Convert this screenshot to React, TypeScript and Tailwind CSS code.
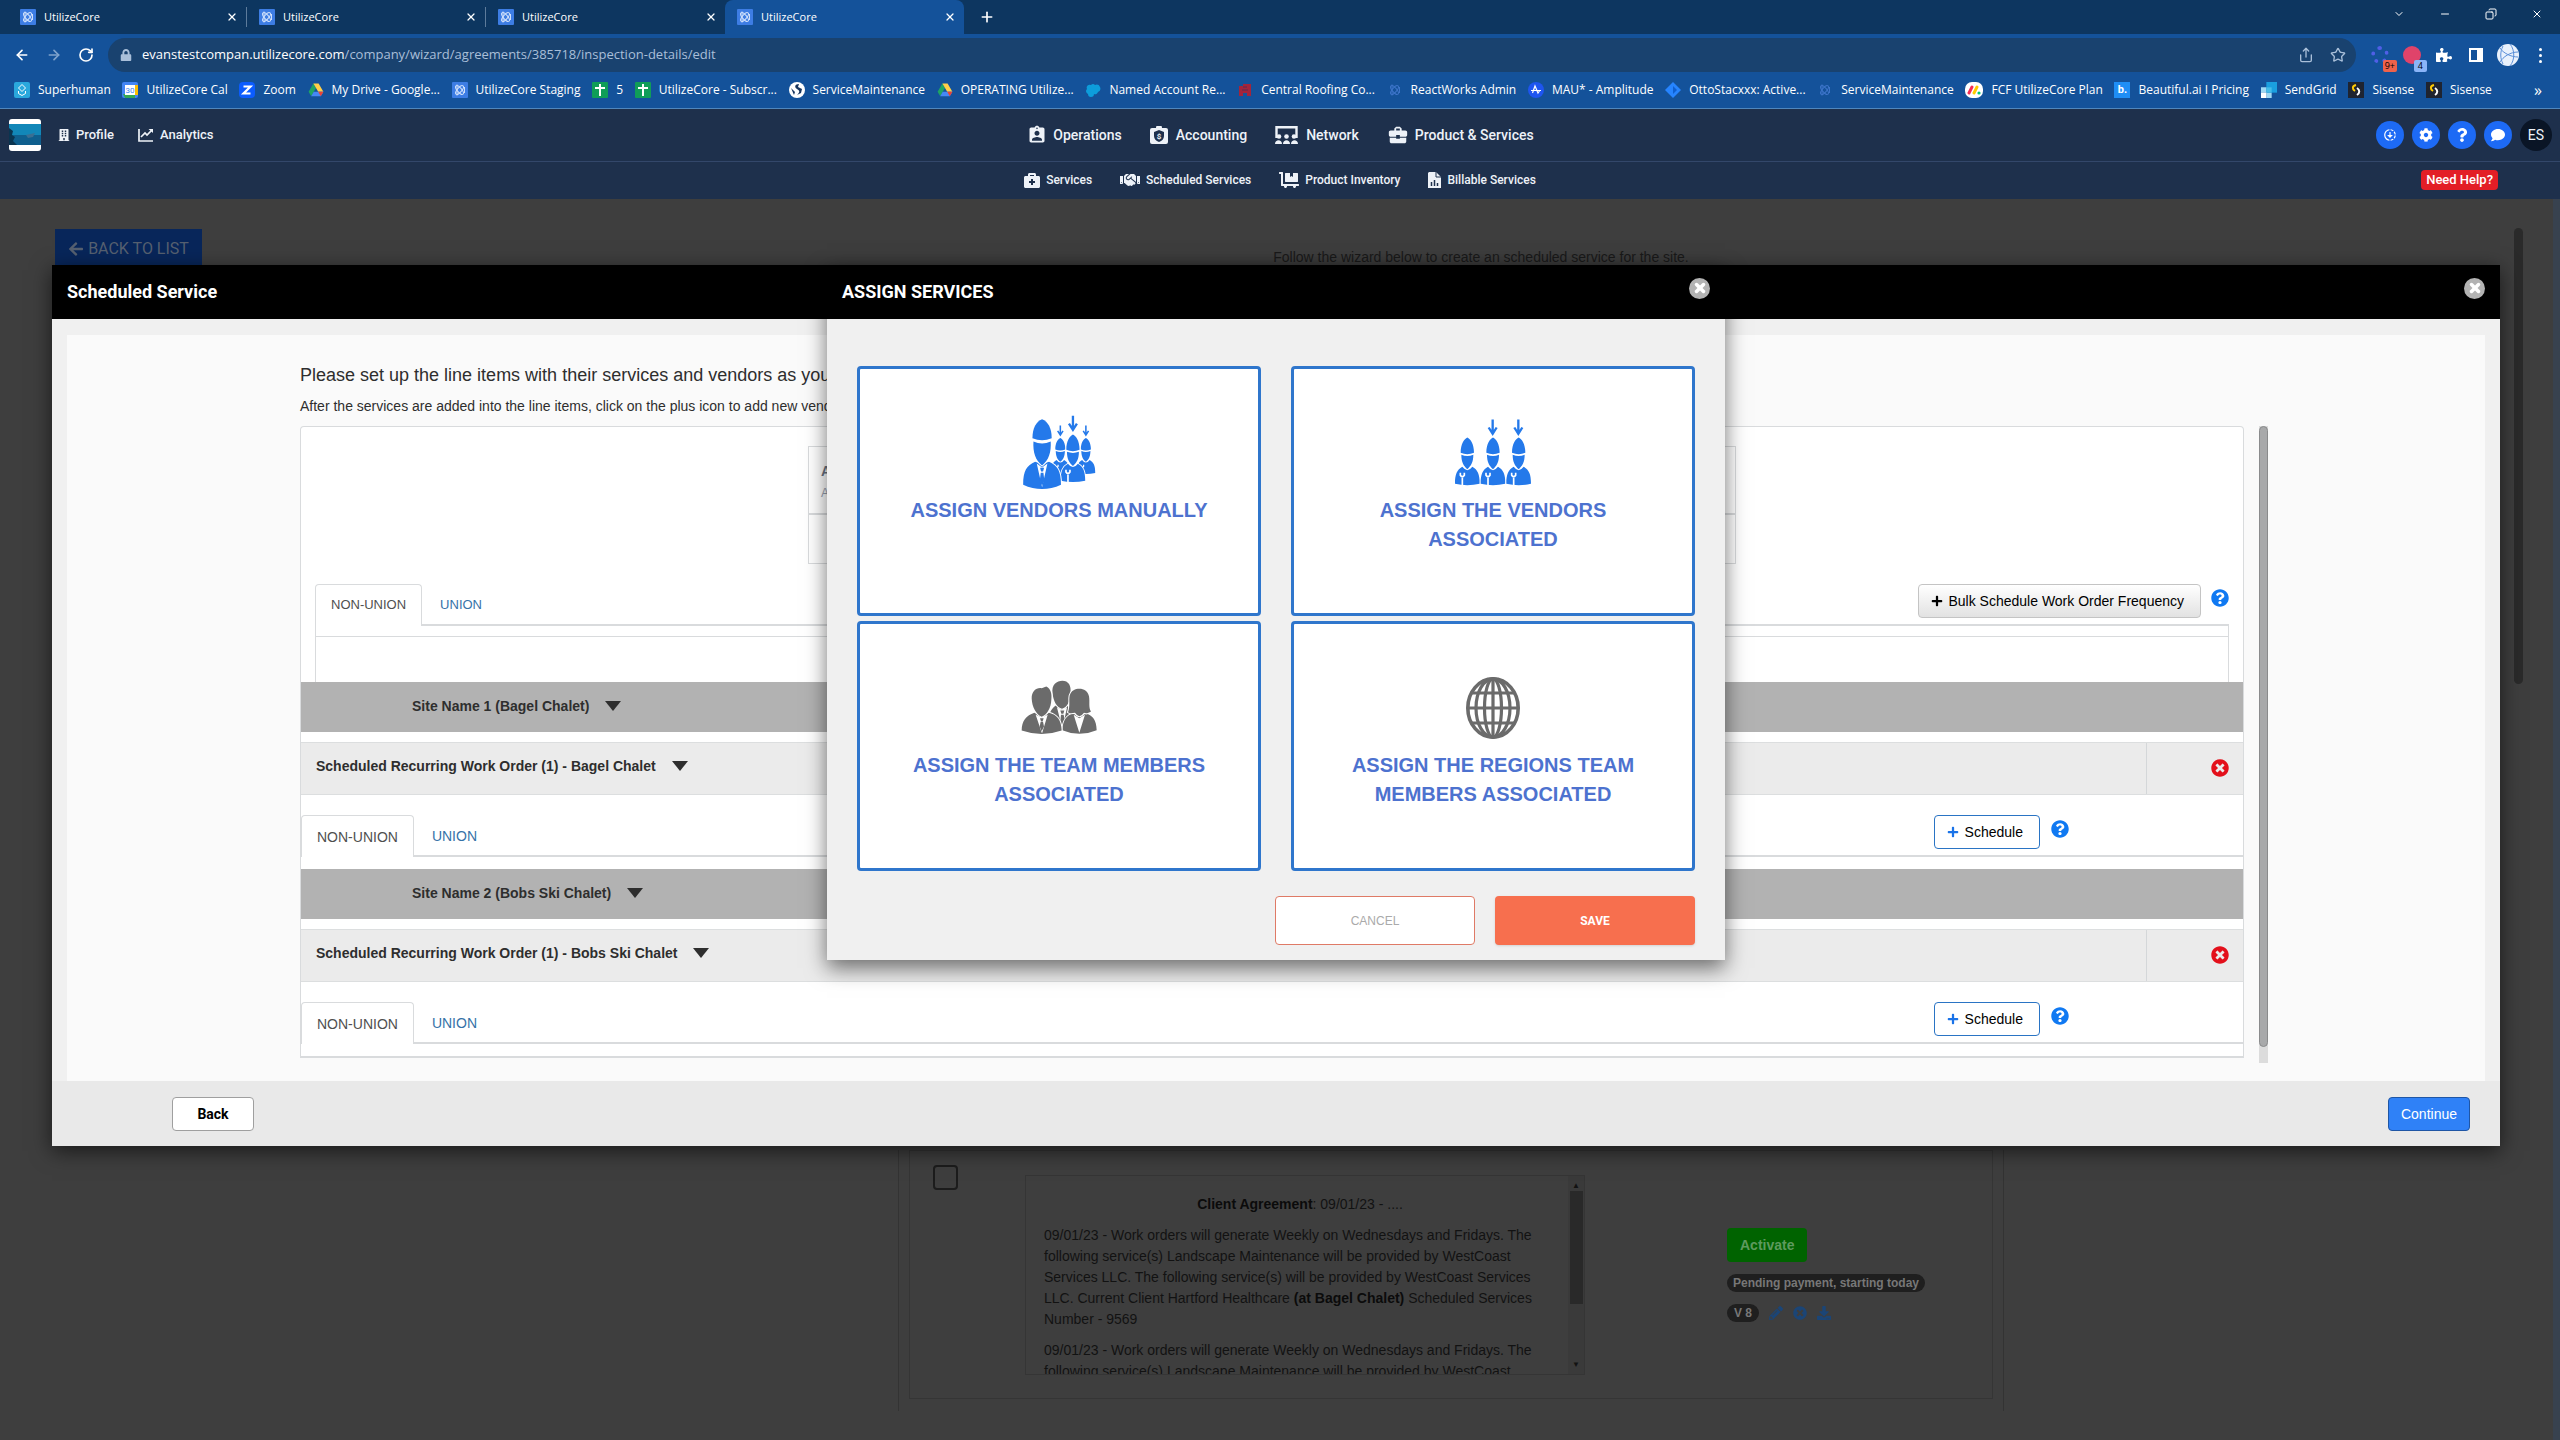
import React from 'react';
import {
    FaArrowLeft, FaBriefcaseMedical, FaBuilding, FaCog, FaComment, FaDownload, FaDollyFlatbed,
    FaHandshake, FaLock, FaPencilAlt, FaPlus, FaPuzzlePiece, FaQuestion, FaQuestionCircle, FaTimesCircle,
} from 'react-icons/fa';
import { MdAssignmentInd, MdBusinessCenter, MdDownloading } from 'react-icons/md';
import { ArrowLeft, ArrowRight, ChevronDown, Copy, Minus, Plus, RotateCw, Share, Star, X } from 'lucide-react';

const ARIAL = 'font-["Liberation_Sans",Arial,sans-serif]';
const ROBOTO = 'font-[Roboto,sans-serif]';

/* ---------- small drawings ---------- */

const Atom: React.FC<{ bg?: string; line?: string }> = ({ bg = '#3d7de4', line = '#cfe0fb' }) => (
    <svg viewBox="0 0 16 16" className="size-4 shrink-0">
        <rect width="16" height="16" rx="1" fill={bg} />
        <g fill="none" stroke={line} strokeWidth="1">
            <ellipse cx="7.5" cy="8" rx="5.5" ry="2.2" transform="rotate(50 7.5 8)" />
            <ellipse cx="7.5" cy="8" rx="5.5" ry="2.2" transform="rotate(-50 7.5 8)" />
            <path d="M5 2.5v11M12.5 5v6" />
        </g>
    </svg>
);

const DriveIcon = () => (
    <svg viewBox="0 0 16 16" className="size-4 shrink-0">
        <path d="M5.4 1.5 8 6 3.2 14.2.6 9.8z" fill="#1fa463" />
        <path d="M5.4 1.5h5.2l4.8 8.3h-5.2z" fill="#ffcf48" />
        <path d="M5.7 9.8h9.7l-2.6 4.4H3.2z" fill="#4688f4" />
        <path d="M10.2 9.8h5.2l-2.6 4.4z" fill="#ea4335" />
    </svg>
);

const SheetIcon = () => (
    <svg viewBox="0 0 16 16" className="size-4 shrink-0">
        <rect width="16" height="16" rx="1" fill="#109d58" />
        <path d="M8 2v12M3 6h10" stroke="#fff" strokeWidth="2" />
    </svg>
);

const SuperhumanIcon = () => (
    <svg viewBox="0 0 16 16" className="size-4 shrink-0">
        <rect width="16" height="16" rx="2" fill="#2aa8dd" />
        <path d="M8 2.500 11.500 6 8 9.500 4.500 6zM4.500 9v2.500L8 13.500l3.500-2V9" fill="none" stroke="#fff" />
    </svg>
);

const CalendarIcon = () => (
    <svg viewBox="0 0 16 16" className="size-4 shrink-0">
        <rect width="16" height="16" rx="2" fill="#4285f4" />
        <path d="M12 3h4v10h-4z" fill="#fbbc04" />
        <path d="M1 12h12v4H3z" fill="#34a853" />
        <rect x="3" y="3" width="10" height="10" fill="#fff" />
        <text x="8" y="11" fontSize="8" textAnchor="middle" fill="#4285f4" fontFamily="Roboto">30</text>
    </svg>
);

const ZoomIcon = () => (
    <svg viewBox="0 0 16 16" className="size-4 shrink-0">
        <rect width="16" height="16" rx="4" fill="#0b5cff" />
        <path d="M4.500 4.500h7l-7 7h7" fill="none" stroke="#fff" strokeWidth="2.200" />
    </svg>
);

const GlobeBadge = () => (
    <svg viewBox="0 0 16 16" className="size-4 shrink-0">
        <circle cx="8" cy="8" r="8" fill="#fff" />
        <path d="M10 2C6 2 5 5 8 7s3 3 0 6l4-2 1-4-4-2zM2 6l4 4-1 3z" fill="#17355f" />
    </svg>
);

const CloudIcon = () => (
    <svg viewBox="0 0 16 16" className="size-4 shrink-0">
        <path d="M3 12a3 3 0 0 1-1-5 3 3 0 0 1 4-4 3 3 0 0 1 4 0 3.500 3.500 0 0 1 3 7 3 3 0 0 1-4 2 3 3 0 0 1-6 0z" fill="#0d9ddb" />
    </svg>
);

const RoofIcon = () => (
    <svg viewBox="0 0 16 16" className="size-4 shrink-0">
        <path d="M2 4h4V2h8v12h-4v-3H6v3H2z" fill="#a3243b" />
        <path d="M6 5h4M5 8h6" stroke="#5b2a52" />
    </svg>
);

const AmplitudeIcon = () => (
    <svg viewBox="0 0 16 16" className="size-4 shrink-0">
        <circle cx="8" cy="8" r="8" fill="#1e55f0" />
        <path d="M3 8.500h10M4.500 11 7 4l3 7 1.500-2" fill="none" stroke="#fff" strokeWidth="1.200" />
    </svg>
);

const JiraIcon = () => (
    <svg viewBox="0 0 16 16" className="size-4 shrink-0">
        <path d="m8 0 8 8-8 8-8-8z" fill="#2684ff" />
        <path d="m8 4 4 4-4 4z" fill="#0e5fd0" />
    </svg>
);

const MondayIcon = () => (
    <svg viewBox="0 0 18 16" className="h-4 w-[18px] shrink-0">
        <rect width="18" height="16" rx="7" fill="#fff" />
        <path d="M4 11 7 5" stroke="#f62b54" strokeWidth="3" strokeLinecap="round" />
        <path d="m9 11 3-6" stroke="#ffcb00" strokeWidth="3" strokeLinecap="round" />
        <circle cx="14" cy="11" r="1.600" fill="#00ca72" />
    </svg>
);

const BeautifulIcon = () => (
    <span className={`flex size-4 shrink-0 items-center justify-center bg-[#1f8ef5] text-[11px] font-bold text-white ${ROBOTO}`}>b.</span>
);

const SendGridIcon = () => (
    <svg viewBox="0 0 15 15" className="size-4 shrink-0">
        <path d="M5 0h10v10H5z" fill="#1a9fe0" />
        <path d="M0 5h5v5H0zM5 10h5v5H5z" fill="#9fd8f3" />
        <path d="M5 5h5v5H5z" fill="#45bce8" />
        <path d="M0 10h5v5H0z" fill="#fff" />
    </svg>
);

const SisenseIcon = () => (
    <svg viewBox="0 0 16 16" className="size-4 shrink-0">
        <rect width="16" height="16" fill="#1f2430" />
        <path d="M8 3C4 4 4 7 7 9" fill="none" stroke="#ffcb05" strokeWidth="2" />
        <path d="M9 6c3 2 3 5 0 7" fill="none" stroke="#fff" strokeWidth="2" />
    </svg>
);

const CompanyLogo = () => (
    <svg viewBox="0 0 32 32" className="mr-[17px] size-8">
        <rect width="32" height="32" rx="3" fill="#fff" />
        <path d="M0 5h32v11H0z" fill="#1287b8" />
        <path d="M0 16h32v10H0z" fill="#0f5f8e" />
        <path d="M0 9l4 3-1 4 3 2-2 4 4 4H0z" fill="#0a3450" />
        <path d="M17 16l9-2-2 4-5 1z" fill="#3b6f92" />
    </svg>
);

const ChartIcon = () => (
    <svg viewBox="0 0 16 14" className="h-3.5 w-4">
        <path d="M1 1v12h14M3 9l4-4 2 2 5-5" fill="none" stroke="currentColor" strokeWidth="1.700" />
        <path d="M10.500 1H15v4z" fill="currentColor" />
    </svg>
);

const AccountingIcon = () => (
    <svg viewBox="0 0 18 18" className="size-[18px]">
        <path d="M2 2h4a3 3 0 0 1 6 0h4a2 2 0 0 1 2 2v12a2 2 0 0 1-2 2H2a2 2 0 0 1-2-2V4a2 2 0 0 1 2-2z" fill="currentColor" />
        <path d="m9 4 5 2v4c0 3-2 5-5 6-3-1-5-3-5-6V6z" fill="#1e304c" />
        <text x="9" y="13" fontSize="8" fontWeight="700" textAnchor="middle" fill="currentColor" fontFamily="Roboto">$</text>
    </svg>
);

const NetworkIcon = () => (
    <svg viewBox="0 0 23 18" className="h-[18px] w-[23px]">
        <path d="M1.500 12V1.200h20V12" fill="none" stroke="currentColor" strokeWidth="2.400" />
        <g fill="currentColor">
            <circle cx="4" cy="10.500" r="2.300" /><circle cx="11.500" cy="10.500" r="2.300" /><circle cx="19" cy="10.500" r="2.300" />
            <path d="M0 18c0-5 7-5 7 0zM8 18c0-5 7-5 7 0zM16 18c0-5 7-5 7 0z" />
        </g>
    </svg>
);

const BillIcon = () => (
    <svg viewBox="0 0 13 16" className="h-4 w-[13px]">
        <path d="M1 0h7l5 5v11H0V1z" fill="currentColor" />
        <path d="M8 0v5h5" fill="none" stroke="#1e304c" />
        <path d="M3.500 14v-4M6.500 14V8M9.500 14v-3" stroke="#1e304c" strokeWidth="1.500" />
    </svg>
);

const HELMET = 'M-20 46C-20 18-9 4 0 0 9 4 20 18 20 46Q0 54-20 46Z';
const FACE = 'M-18 52Q0 59 18 52C18 74 11 86 0 95-11 86-18 74-18 52Z';
const TORSO = 'M-37 139C-37 110-31 97-15 88Q0 108 15 88C31 97 37 110 37 139Q0 147-37 139Z';

const Worker: React.FC<{ x: number; y: number; scale?: number }> = ({ x, y, scale = 1 }) => (
    <g transform={`translate(${x} ${y}) scale(${scale})`}>
        <path d={`${HELMET}${FACE}${TORSO}`} fill="#2479ea" stroke="#fff" strokeWidth="5" paintOrder="stroke" />
        <path d="M-15 145V121M-21 106v7q6 9 12 0v-7" fill="none" stroke="#fff" strokeWidth="5" />
    </g>
);

const DownArrow: React.FC<{ x: number; y: number; size: number }> = ({ x, y, size }) => (
    <g transform={`translate(${x} ${y}) scale(${size / 48})`}>
        <path d="M0 0V42M-12 24 0 43 12 24" fill="none" stroke="#2479ea" strokeWidth="7" />
    </g>
);

const ManualVendorsIcon = () => (
    <svg viewBox="24 28 225 226" className="size-[75px]">
        <Worker x={139} y={97} scale={0.76} />
        <Worker x={216} y={97} scale={0.76} />
        <Worker x={177} y={87} />
        <DownArrow x={139} y={60} size={32} />
        <DownArrow x={177} y={30} size={48} />
        <DownArrow x={216} y={60} size={32} />
        <g fill="#2479ea" stroke="#fff" strokeWidth="6" paintOrder="stroke">
            <path d="M27 238C27 196 38 180 63 169L84 176 105 169C130 180 141 196 141 238Q84 264 27 238Z" />
            <path d="M55 98C55 68 66 48 84 41 102 48 113 68 113 98Q84 110 55 98Z" />
            <path d="M58 108Q84 120 110 108C112 140 104 165 84 180 64 165 56 140 58 108Z" />
        </g>
        <path d="M68 174 84 246 100 174 84 186Z" fill="#fff" />
        <path d="M78 187h12l-3 11h-6zM80 202h8l3 24-7 16-7-16z" fill="#2479ea" />
    </svg>
);

const VendorsIcon = () => (
    <svg viewBox="1322 42 234 206" className="h-[69px] w-[78px]">
        <Worker x={1362} y={100} />
        <Worker x={1439} y={100} />
        <Worker x={1516} y={100} />
        <DownArrow x={1438} y={46} size={48} />
        <DownArrow x={1515} y={46} size={48} />
    </svg>
);

const TeamIcon = () => (
    <svg viewBox="22 826 228 164" className="h-[55px] w-[76px]">
        <g fill="#6b6b6b" stroke="#fff" strokeWidth="6" paintOrder="stroke">
            <path d="M108 925Q118 905 130 900L146 915 162 900 178 960H115Z" />
            <path d="M117 866C112 840 130 828 146 828 164 828 174 842 170 866 170 890 160 908 145 912 130 908 119 890 117 866Z" />
            <path d="M130 908 146 972 160 908 145 915Z" fill="#fff" stroke="none" />
            <path d="M140 917h12l-3 10h-6zM142 930h8l4 20-8 16-6-16z" stroke="none" />
            <path d="M146 976C148 945 158 932 178 926L197 934 216 926C238 932 248 945 249 976Q197 998 146 976Z" />
            <path d="M163 922C170 905 165 885 168 872 173 857 185 852 197 852 211 852 222 858 226 874 229 892 224 908 232 920 224 926 215 926 211 924Q197 944 184 924 174 926 168 925Z" />
            <path d="M180 930 197 984 214 930 197 940Z" fill="#fff" stroke="none" />
            <path d="M24 977C24 948 38 932 62 924L84 936 106 924C130 930 143 945 144 977Q84 998 24 977Z" />
            <path d="M54 880C54 860 68 847 84 850L98 845C112 852 115 868 113 885 112 910 100 930 84 936 68 928 55 908 54 880Z" />
            <path d="M66 930 85 986 102 930 84 938Z" fill="#fff" stroke="none" />
            <path d="M79 940h11l-3 9h-5zM81 951h7l3 14-7 14-6-14z" stroke="none" />
        </g>
    </svg>
);

const RegionsIcon = () => (
    <svg viewBox="0 0 54 62" className="h-[62px] w-[54px]">
        <g fill="none" stroke="#6b6b6b" strokeWidth="3.200">
            <ellipse cx="27" cy="31" rx="25.200" ry="29.200" strokeWidth="3.600" />
            <ellipse cx="27" cy="31" rx="17" ry="29.200" />
            <ellipse cx="27" cy="31" rx="8.500" ry="29.200" />
            <path d="M27 2v58M2 31h50M6 16h42M6 46h42" />
        </g>
    </svg>
);

/* ---------- browser window ---------- */

const BOOKMARKS = [
    { label: 'Superhuman', icon: <SuperhumanIcon /> },
    { label: 'UtilizeCore Cal', icon: <CalendarIcon /> },
    { label: 'Zoom', icon: <ZoomIcon /> },
    { label: 'My Drive - Google...', icon: <DriveIcon /> },
    { label: 'UtilizeCore Staging', icon: <Atom /> },
    { label: '5', icon: <SheetIcon /> },
    { label: 'UtilizeCore - Subscr...', icon: <SheetIcon /> },
    { label: 'ServiceMaintenance', icon: <GlobeBadge /> },
    { label: 'OPERATING Utilize...', icon: <DriveIcon /> },
    { label: 'Named Account Re...', icon: <CloudIcon /> },
    { label: 'Central Roofing Co...', icon: <RoofIcon /> },
    { label: 'ReactWorks Admin', icon: <Atom bg="#14529a" line="#3d74c9" /> },
    { label: 'MAU* - Amplitude', icon: <AmplitudeIcon /> },
    { label: 'OttoStacxxx: Active...', icon: <JiraIcon /> },
    { label: 'ServiceMaintenance', icon: <Atom bg="#14529a" line="#3d74c9" /> },
    { label: 'FCF UtilizeCore Plan', icon: <MondayIcon /> },
    { label: 'Beautiful.ai I Pricing', icon: <BeautifulIcon /> },
    { label: 'SendGrid', icon: <SendGridIcon /> },
    { label: 'Sisense', icon: <SisenseIcon /> },
    { label: 'Sisense', icon: <SisenseIcon /> },
];

const BrowserChrome: React.FC = () => (
    <div className='border-b border-[#4f86bd] bg-[#14529a] font-["Open_Sans",sans-serif] text-xs text-white'>
        <div className="flex h-[34px] items-center bg-[#0d3660] pl-2">
            {[0, 1, 2, 3].map((tab) => (
                <div
                    key={tab}
                    className={`flex h-full w-[239px] shrink-0 items-center gap-2 pr-2 pl-3 ${tab === 3 ? 'rounded-t-lg bg-[#14529a]' : ''}`}
                >
                    <Atom />
                    <span className="flex-1 text-[11px]">UtilizeCore</span>
                    <button aria-label="Close tab"><X className="size-3" strokeWidth={2.5} /></button>
                    {tab < 2 && <span className="-mr-2 h-5 w-px bg-[#5d7b9b]" />}
                </div>
            ))}
            <button aria-label="New tab" className="ml-[15px]"><Plus className="size-4" strokeWidth={2.5} /></button>
            <div className="ml-auto flex items-center gap-[34px] pr-[17px] pb-1.5">
                <button aria-label="Search tabs"><ChevronDown className="size-3" /></button>
                <button aria-label="Minimize"><Minus className="size-3" /></button>
                <button aria-label="Restore"><Copy className="size-3 -scale-x-100" /></button>
                <button aria-label="Close"><X className="size-3" /></button>
            </div>
        </div>
        <div className="flex h-[38px] items-end">
            <div className="flex h-[34px] w-[108px] items-center gap-4 pl-3.5">
                <button aria-label="Back"><ArrowLeft className="size-4" strokeWidth={2.5} /></button>
                <button aria-label="Forward"><ArrowRight className="size-4 text-[#7fa3cc]" strokeWidth={2.5} /></button>
                <button aria-label="Reload"><RotateCw className="size-4" strokeWidth={2.5} /></button>
            </div>
            <div className="flex h-[34px] flex-1 items-center rounded-full bg-[#19426f] pr-2.5 pl-3 text-[#a9bfd9]">
                <FaLock className="mr-2.5 size-3" />
                <span className="flex-1 text-[13px]">
                    <span className="text-white">evanstestcompan.utilizecore.com</span>
                    /company/wizard/agreements/385718/inspection-details/edit
                </span>
                <Share className="mr-4 size-4" />
                <Star className="size-4" />
            </div>
            <div className="flex h-[34px] items-center pl-2 *:flex *:w-8 *:items-center *:justify-center">
                <div>
                    <span className="flex size-[18px] items-end justify-end rounded-full border-4 border-dotted border-[#4f5fe6]">
                        <span className="-mr-3 -mb-3 rounded-xs bg-[#f0624a] px-0.5 text-[9px] leading-3 text-black">9+</span>
                    </span>
                </div>
                <div>
                    <span className="flex size-[18px] items-end justify-end rounded-full bg-[#e0436a]">
                        <span className="-mr-1.5 -mb-2 rounded-xs bg-[#8ab4f8] px-1 text-[9px] leading-3 text-black">4</span>
                    </span>
                </div>
                <div><FaPuzzlePiece className="size-4" /></div>
                <div><span className="size-3.5 border-2 border-r-[6px] border-white" /></div>
                <div>
                    <svg viewBox="0 0 24 24" className="size-6">
                        <circle cx="12" cy="12" r="11" fill="#e9f1fc" />
                        <path d="M4 5c3 5 11 9 18 9M4 19C7 14 14 9 22 9M7 3c-3 6-3 12 0 18M14 1c5 6 5 16 0 22" fill="none" stroke="#5b8fd8" />
                    </svg>
                </div>
                <div className="mr-1 flex-col gap-[3px]">
                    <i className="size-[3px] rounded-full bg-white" />
                    <i className="size-[3px] rounded-full bg-white" />
                    <i className="size-[3px] rounded-full bg-white" />
                </div>
            </div>
        </div>
        <div className="flex h-9 items-center pl-3.5 pr-[18px]">
            <div className="mr-[42px] flex flex-1 justify-between">
                {BOOKMARKS.map((bookmark, index) => (
                    <a key={index} href="#" className="flex items-center gap-2 whitespace-nowrap">
                        {bookmark.icon}
                        {bookmark.label}
                    </a>
                ))}
            </div>
            <span className="text-base leading-4">»</span>
        </div>
    </div>
);

/* ---------- application header ---------- */

const AppHeader: React.FC = () => (
    <header className={`bg-[#1e304c] font-medium text-[#eef2f8] ${ROBOTO}`}>
        <div className="grid h-[53px] grid-cols-[1fr_auto_1fr] items-center border-b border-[#33476a] pr-2 pl-[9px] text-sm">
            <div className="flex items-center text-[13px]">
                <CompanyLogo />
                <a href="#" className="mr-6 flex items-center gap-1.5"><FaBuilding className="size-3" />Profile</a>
                <a href="#" className="flex items-center gap-1.5"><ChartIcon />Analytics</a>
            </div>
            <nav className="flex items-center gap-7">
                <a href="#" className="flex items-center gap-1.5"><MdAssignmentInd className="size-5" />Operations</a>
                <a href="#" className="flex items-center gap-2"><AccountingIcon />Accounting</a>
                <a href="#" className="flex items-center gap-2"><NetworkIcon />Network</a>
                <a href="#" className="flex items-center gap-1.5"><MdBusinessCenter className="size-[22px]" />Product &amp; Services</a>
            </nav>
            <div className="flex items-center justify-end gap-2">
                {[MdDownloading, FaCog, FaQuestion, FaComment].map((Icon, index) => (
                    <button key={index} className="flex size-7 items-center justify-center rounded-full bg-[#1d6af5] text-white">
                        <Icon className="size-3.5" />
                    </button>
                ))}
                <button className="flex size-8 items-center justify-center rounded-full bg-[#0a1526] font-normal">ES</button>
            </div>
        </div>
        <div className="grid h-[37px] grid-cols-[1fr_auto_1fr] items-center pb-0.5 text-xs">
            <span />
            <nav className="flex items-center gap-7">
                <a href="#" className="flex items-center gap-1.5"><FaBriefcaseMedical className="size-4" />Services</a>
                <a href="#" className="flex items-center gap-1.5"><FaHandshake className="size-5" />Scheduled Services</a>
                <a href="#" className="flex items-center gap-1.5"><FaDollyFlatbed className="size-5" />Product Inventory</a>
                <a href="#" className="flex items-center gap-1.5"><BillIcon />Billable Services</a>
            </nav>
            <div className="flex justify-end pr-[62px]">
                <a href="#" className="rounded-sm bg-[#e31e26] px-[5px] text-[13px] leading-5 text-white">Need Help?</a>
            </div>
        </div>
    </header>
);

/* ---------- dimmed page behind the dialogs ---------- */

const AgreementText: React.FC = () => (
    <p className="mb-2.5">
        09/01/23 - Work orders will generate Weekly on Wednesdays and Fridays. The following service(s) Landscape
        Maintenance will be provided by WestCoast Services LLC. The following service(s) will be provided by
        WestCoast Services LLC. Current Client Hartford Healthcare <b className="text-[#0b0b0b]">(at Bagel Chalet)</b> Scheduled
        Services Number - 9569
    </p>
);

const WizardPage: React.FC = () => (
    <div className={`flex flex-1 bg-[#3e3e3e] text-sm text-[#121212] ${ARIAL}`}>
        <div className="flex flex-1 flex-col">
            <div className="grid h-[951px] grid-cols-[1fr_auto_1fr] items-start pt-[30px]">
                <button className={`ml-[55px] flex h-10 w-[147px] items-center justify-center gap-1 bg-[#08265a] text-base text-[#566070] ${ROBOTO}`}>
                    <FaArrowLeft className="size-4" />BACK TO LIST
                </button>
                <p className="pt-5 pl-[448px] leading-4 text-[#1a1a1a]">Follow the wizard below to create an scheduled service for the site.</p>
            </div>
            <div className="ml-[898px] flex w-[1106px] border-x border-[#333] px-2.5 pb-3">
                <div className="flex-1 border border-[#353535]">
                    <div className="flex h-[247px] pt-3.5 pl-[23px]">
                        <input type="checkbox" aria-label="Select agreement" className="mr-[67px] size-[25px] appearance-none rounded border-2 border-[#1c1c1c]" />
                        <div className="mt-2.5 flex h-[200px] w-[560px] overflow-hidden border border-[#353535]">
                            <div className="flex-1 pr-3 pl-[18px] pt-[18px] leading-[21px]">
                                <p className="mb-2.5 text-center"><b className="text-[#0b0b0b]">Client Agreement</b>: 09/01/23 - ....</p>
                                <AgreementText />
                                <AgreementText />
                            </div>
                            <div className="flex w-4 flex-col items-center justify-between bg-[#3a3a3a] py-1 text-[8px]">
                                <span>▲</span>
                                <span className="mb-auto h-[113px] w-[13px] bg-[#292929]" />
                                <span>▼</span>
                            </div>
                        </div>
                        <div className="ml-[142px] flex flex-col items-start pt-[63px] font-bold text-[#777]">
                            <button className="h-[34px] rounded bg-[#006300] px-[13px] text-[#5e9a5e]">Activate</button>
                            <span className="mt-3 rounded-full bg-[#1f1f1f] px-1.5 text-xs leading-[18px]">Pending payment, starting today</span>
                            <span className="mt-3 flex items-center gap-2.5 text-[#1b4576]">
                                <span className="rounded-full bg-[#1f1f1f] px-[7px] text-xs leading-[18px] text-[#777]">V 8</span>
                                <FaPencilAlt className="size-3.5" /><FaTimesCircle className="size-3.5" /><FaDownload className="size-3.5" />
                            </span>
                        </div>
                    </div>
                </div>
            </div>
        </div>
        <div className="mt-[29px] mr-[30px] h-[456px] w-[9px] rounded-full bg-[#2a2a2a]" />
        <div className="w-[7px] bg-[#38424f]" />
    </div>
);

/* ---------- scheduled service dialog ---------- */

const DialogHeader: React.FC<{ title: string }> = ({ title }) => (
    <div className={`flex h-[54px] items-center justify-between bg-black px-[15px] text-lg font-bold text-white ${ROBOTO}`}>
        <h2>{title}</h2>
        <button aria-label="Close" className="mb-2 flex size-[21px] items-center justify-center rounded-full bg-[#b3b3b3]">
            <X className="size-3.5" strokeWidth={6} />
        </button>
    </div>
);

const Tabs: React.FC<{ large?: boolean; children: React.ReactNode }> = ({ large, children }) => (
    <div className={`flex h-[42px] items-start border-b-2 border-[#d9dbdd] ${large ? 'text-sm' : 'text-[13px]'}`}>
        <button className="h-[42px] rounded-t border border-b-0 border-[#d9dbdd] bg-white px-[15px] text-[#4f4f4f]">NON-UNION</button>
        <button className="h-[42px] px-[18px] text-[#3672a8]">UNION</button>
        {children}
    </div>
);

const Triangle = () => (
    <svg viewBox="0 0 18 10" className="h-2.5 w-[18px]"><path d="M1 0h16L9 10z" fill="#2e2e2e" /></svg>
);

const SITES = [
    { title: 'Site Name 1 (Bagel Chalet)', order: 'Scheduled Recurring Work Order (1) - Bagel Chalet' },
    { title: 'Site Name 2 (Bobs Ski Chalet)', order: 'Scheduled Recurring Work Order (1) - Bobs Ski Chalet' },
];

const SiteSection: React.FC<{ title: string; order: string }> = ({ title, order }) => (
    <section>
        <h3 className="flex h-[50px] items-center gap-[15px] bg-[#b2b2b2] pb-[3px] pl-[111px] font-bold">{title}<Triangle /></h3>
        <div className="mt-2.5 flex h-[53px] items-center border-y border-[#dcdedf] bg-[#ebebeb]">
            <h4 className="flex flex-1 items-center gap-[15px] pb-[5px] pl-[15px] font-bold">{order}<Triangle /></h4>
            <div className="flex h-full w-[97px] items-center justify-end border-l border-[#d4d7d9] pr-3.5 pb-0.5">
                <button aria-label="Remove work order"><FaTimesCircle className="size-[18px] text-[#e3101b]" /></button>
            </div>
        </div>
        <div className="mt-5 mb-3">
            <Tabs large>
                <div className="ml-auto flex gap-[11px] pr-[174px]">
                    <button className="flex h-[34px] items-center gap-1.5 rounded border border-[#2a74c4] bg-white px-3 pr-4 text-black">
                        <FaPlus className="size-3 text-[#1a73e8]" />Schedule
                    </button>
                    <FaQuestionCircle className="mt-[5px] size-[18px] text-[#1079f2]" />
                </div>
            </Tabs>
        </div>
    </section>
);

const ScheduledServiceDialog: React.FC = () => (
    <div role="dialog" aria-label="Scheduled Service" className={`w-full bg-[#f0f0f0] text-sm text-[#2e2e2e] shadow-[0_5px_20px_rgba(0,0,0,0.6)] ${ARIAL}`}>
        <DialogHeader title="Scheduled Service" />
        <div className="mx-[15px] mt-4 bg-[#fafafa] pt-7 pr-[217px] pb-[23px] pl-[233px]">
            <p className="text-lg leading-6">Please set up the line items with their services and vendors as you</p>
            <p className="mt-[9px] mb-2.5 leading-5">After the services are added into the line items, click on the plus icon to add new vendors</p>
            <div className="flex gap-[15px]">
                <div className="flex-1 self-start rounded-t border border-b-2 border-[#d9dbdd] bg-white">
                    <div className="px-3.5 pt-[19px]">
                        <div className="mx-auto h-[118px] w-[928px] border border-[#d9dbdd]">
                            <div className="h-[68px] border-b-2 border-[#d9dbdd] px-3 pt-3">
                                <p className="font-bold leading-6 text-gray-500">A</p>
                                <p className="text-xs leading-5 text-gray-400">A</p>
                            </div>
                        </div>
                        <div className="mt-5">
                            <Tabs>
                                <div className="ml-auto flex gap-2.5">
                                    <button className="flex h-[34px] items-center gap-[5px] rounded border border-[#c4c4c4] bg-linear-to-b from-white to-[#e2e2e2] pr-4 pl-3 text-sm text-black">
                                        <FaPlus className="size-3" />Bulk Schedule Work Order Frequency
                                    </button>
                                    <FaQuestionCircle className="mt-[5px] size-[18px] text-[#1079f2]" />
                                </div>
                            </Tabs>
                            <div className="h-14 border-x border-[#d9dbdd] pt-2.5">
                                <div className="h-full border-t border-[#d9dbdd]" />
                            </div>
                        </div>
                    </div>
                    {SITES.map((site) => (
                        <SiteSection key={site.title} title={site.title} order={site.order} />
                    ))}
                </div>
                <div className="-mb-[5px] w-[9px] bg-[#dcdcdc] pb-4">
                    <div className="h-full rounded-full border border-[#8a8b8c] bg-[#a8a9aa]" />
                </div>
            </div>
        </div>
        <div className="flex h-[65px] items-center justify-between bg-[#e9e9e9] pr-[30px] pl-[120px]">
            <button className={`h-[34px] w-[82px] rounded-sm border border-[#9f9f9f] bg-white font-bold text-black ${ROBOTO}`}>Back</button>
            <button className="h-[34px] w-[82px] rounded-sm border border-[#1f56a5] bg-[#2f81f7] text-white">Continue</button>
        </div>
    </div>
);

/* ---------- assign services dialog ---------- */

const ASSIGN_OPTIONS = [
    { label: 'ASSIGN VENDORS MANUALLY', icon: <ManualVendorsIcon /> },
    { label: 'ASSIGN THE VENDORS ASSOCIATED', icon: <VendorsIcon /> },
    { label: 'ASSIGN THE TEAM MEMBERS ASSOCIATED', icon: <TeamIcon /> },
    { label: 'ASSIGN THE REGIONS TEAM MEMBERS ASSOCIATED', icon: <RegionsIcon /> },
];

const AssignServicesDialog: React.FC = () => (
    <div role="dialog" aria-label="Assign services" className={`w-[898px] bg-[#f0f0f0] shadow-[0_8px_20px_rgba(0,0,0,0.55)] ${ARIAL}`}>
        <DialogHeader title="ASSIGN SERVICES" />
        <div className="px-[30px] pt-[47px] pb-[15px]">
            <div className="grid grid-cols-2 gap-x-[30px] gap-y-[5px]">
                {ASSIGN_OPTIONS.map((option) => (
                    <button
                        key={option.label}
                        className="flex h-[250px] flex-col items-center rounded-sm border-3 border-[#2f76cc] bg-white px-10 pt-10 text-xl leading-[29px] font-bold text-[#4d72cf]"
                    >
                        <span className="flex h-[87px] items-center">{option.icon}</span>
                        <span>{option.label}</span>
                    </button>
                ))}
            </div>
            <div className={`mt-[25px] flex justify-end gap-5 text-xs ${ROBOTO}`}>
                <button className={`h-[49px] w-[200px] rounded-sm border border-[#df7a66] bg-white text-[#aaa] ${ARIAL}`}>CANCEL</button>
                <button className="h-[49px] w-[200px] rounded-sm bg-[#f76f4e] font-bold text-white shadow-sm">SAVE</button>
            </div>
        </div>
    </div>
);

const App: React.FC = () => {
    return (
        <div className="flex min-h-screen flex-col">
            <BrowserChrome />
            <AppHeader />
            <main className="relative flex flex-1 flex-col">
                <WizardPage />
                <div className="absolute inset-0 flex items-start pt-[66px] pr-[60px] pl-[52px]">
                    <ScheduledServiceDialog />
                </div>
                <div className="absolute inset-0 flex items-start justify-center pt-[66px] pr-[60px] pl-[52px]">
                    <AssignServicesDialog />
                </div>
            </main>
        </div>
    );
};

export default App;
